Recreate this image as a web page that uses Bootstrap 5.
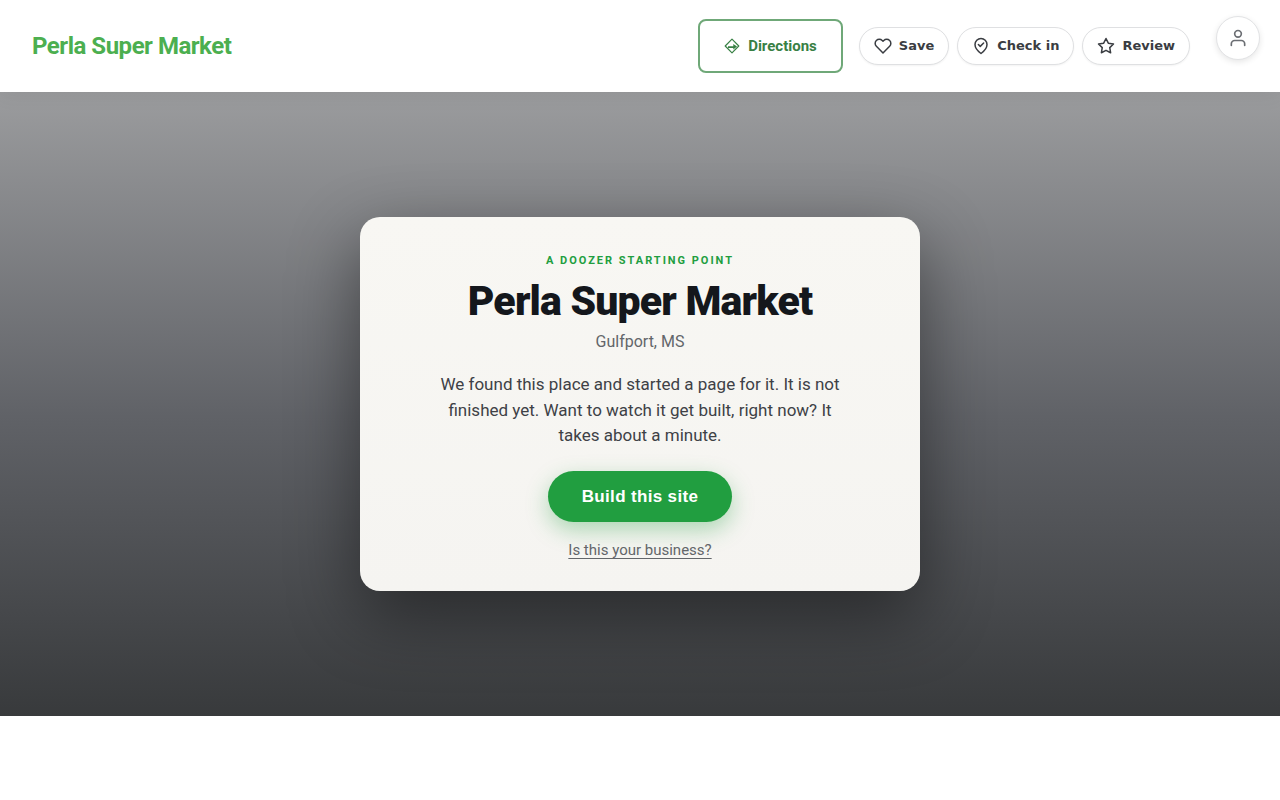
<!DOCTYPE html>
<html lang="en">
<head>
<meta charset="utf-8">
<meta name="viewport" content="width=device-width, initial-scale=1">
<title>Perla Super Market</title>
<link href="https://cdn.jsdelivr.net/npm/bootstrap@5.3.0/dist/css/bootstrap.min.css" rel="stylesheet">
<style>
  body { font-family: Roboto, sans-serif; color: #3e4146; background: #fff; }
  .site-header { min-height: 92px; padding: 16px 20px 16px 32px; box-shadow: 0 1px 20px rgba(0,0,0,.08); position: relative; z-index: 1; }
  .site-brand { font-size: 24px; line-height: 36px; font-weight: 700; letter-spacing: -0.02em; color: #4caf50; }
  .header-actions { min-height: 60px; }
  .btn-directions { --bs-btn-color: #388044; --bs-btn-border-color: #6fa878; --bs-btn-hover-color: #fff; --bs-btn-hover-bg: #388044;
    --bs-btn-border-width: 2px; --bs-btn-border-radius: 8px; --bs-btn-padding-x: 24px; --bs-btn-padding-y: 13px;
    --bs-btn-font-size: 15px; --bs-btn-font-weight: 700; --bs-btn-line-height: 24px; gap: 8px; }
  .btn-pill { --bs-btn-color: #3a3d42; --bs-btn-bg: #fff; --bs-btn-border-color: #dfe0e2; --bs-btn-border-radius: 19px;
    --bs-btn-padding-x: 14px; --bs-btn-padding-y: 8px; --bs-btn-font-size: 13px; --bs-btn-font-weight: 700; --bs-btn-line-height: 20px;
    font-family: "DejaVu Sans", sans-serif; gap: 7px; box-shadow: 0 1px 2px rgba(0,0,0,.05); }
  .btn-account { width: 44px; height: 44px; margin-left: 26px; color: #6b6e73; background: #fff; border: 1px solid #e2e3e5; box-shadow: 0 2px 6px rgba(0,0,0,.1); }
  .stroke-icon { fill: none; stroke: currentColor; stroke-width: 2; stroke-linecap: round; stroke-linejoin: round; }
  .hero { min-height: 78vh; background: linear-gradient(#9b9c9e, #606267 52%, #383a3c); }
  .start-card { width: 100%; max-width: 560px; padding: 35px 40px 29px; border-radius: 20px;
    background: linear-gradient(#f8f7f3, #f5f4f1); box-shadow: 0 24px 70px rgba(0,0,0,.45); }
  .eyebrow { font-size: 11px; line-height: 18px; font-weight: 700; letter-spacing: 0.18em; color: #219e40; }
  .start-title { font-size: 41px; line-height: 44px; font-weight: 900; letter-spacing: -0.02em; color: #14171c; margin: 9px 0 7px; }
  .place { font-size: 16px; line-height: 24px; color: #63666a; margin-bottom: 18px; }
  .pitch { font-size: 17px; line-height: 1.5; max-width: 410px; margin-bottom: 22px; }
  .btn-build { --bs-btn-color: #fff; --bs-btn-bg: #219e40; --bs-btn-hover-color: #fff; --bs-btn-hover-bg: #1b8836;
    --bs-btn-border-width: 0; --bs-btn-padding-x: 34px; --bs-btn-padding-y: 15px; --bs-btn-font-size: 17px; --bs-btn-font-weight: 700;
    --bs-btn-line-height: 21px; font-family: "Liberation Sans", sans-serif; letter-spacing: 0.02em; box-shadow: 0 8px 22px rgba(33,158,64,.35); }
  .owner-link { font-size: 15px; line-height: 22px; color: #63666a; text-underline-offset: 3px; }
</style>
</head>
<body>
<header class="site-header d-flex align-items-center justify-content-between bg-white flex-wrap">
  <a class="site-brand text-decoration-none" href="#">Perla Super Market</a>
  <div class="header-actions d-flex align-items-center flex-wrap">
    <a class="btn btn-directions d-inline-flex align-items-center me-3" href="#">
      <svg width="16" height="16" viewBox="0 0 16 16" fill="none" stroke="currentColor" stroke-width="1.2" aria-hidden="true"><path d="M8 1.2 14.8 8 8 14.8 1.2 8z" stroke-linejoin="round"/><path d="M4 10V8.2h5.3V5.9L13 8.6l-3.7 2.9V10z" fill="currentColor" stroke="none"/></svg>
      Directions</a>
    <div class="d-flex gap-2">
      <button type="button" class="btn btn-pill d-inline-flex align-items-center"><svg class="stroke-icon" width="18" height="18" viewBox="0 0 24 24" aria-hidden="true"><path d="M20.84 4.61a5.5 5.5 0 0 0-7.78 0L12 5.67l-1.06-1.06a5.5 5.5 0 0 0-7.78 7.78L12 21.23l8.84-8.84a5.5 5.5 0 0 0 0-7.78z"/></svg>Save</button>
      <button type="button" class="btn btn-pill d-inline-flex align-items-center"><svg class="stroke-icon" width="18" height="18" viewBox="0 0 24 24" aria-hidden="true"><path d="M20 10c0 6-8 12-8 12s-8-6-8-12a8 8 0 0 1 16 0z"/><path d="m8.5 10 2.5 2.5 4.5-4.5"/></svg>Check in</button>
      <button type="button" class="btn btn-pill d-inline-flex align-items-center"><svg class="stroke-icon" width="18" height="18" viewBox="0 0 24 24" aria-hidden="true"><path d="m12 2 3.09 6.26L22 9.27l-5 4.87 1.18 6.88L12 17.77l-6.18 3.25L7 14.14 2 9.27l6.91-1.01z"/></svg>Review</button>
    </div>
    <button type="button" class="btn btn-account rounded-circle p-0 align-self-start d-inline-flex align-items-center justify-content-center" aria-label="Account"><svg class="stroke-icon" width="20" height="20" viewBox="0 0 24 24" aria-hidden="true"><path d="M20 21v-2a4 4 0 0 0-4-4H8a4 4 0 0 0-4 4v2"/><circle cx="12" cy="7" r="4"/></svg></button>
  </div>
</header>
<main class="hero d-flex align-items-center justify-content-center px-3">
  <section class="start-card text-center">
    <div class="eyebrow text-uppercase">A Doozer starting point</div>
    <h1 class="start-title">Perla Super Market</h1>
    <p class="place">Gulfport, MS</p>
    <p class="pitch mx-auto">We found this place and started a page for it. It is not finished yet. Want to watch it get built, right now? It takes about a minute.</p>
    <button type="button" class="btn btn-build rounded-pill">Build this site</button>
    <div class="mt-3"><a class="owner-link" href="#">Is this your business?</a></div>
  </section>
</main>
<script src="https://cdn.jsdelivr.net/npm/bootstrap@5.3.0/dist/js/bootstrap.bundle.min.js"></script>
</body>
</html>
